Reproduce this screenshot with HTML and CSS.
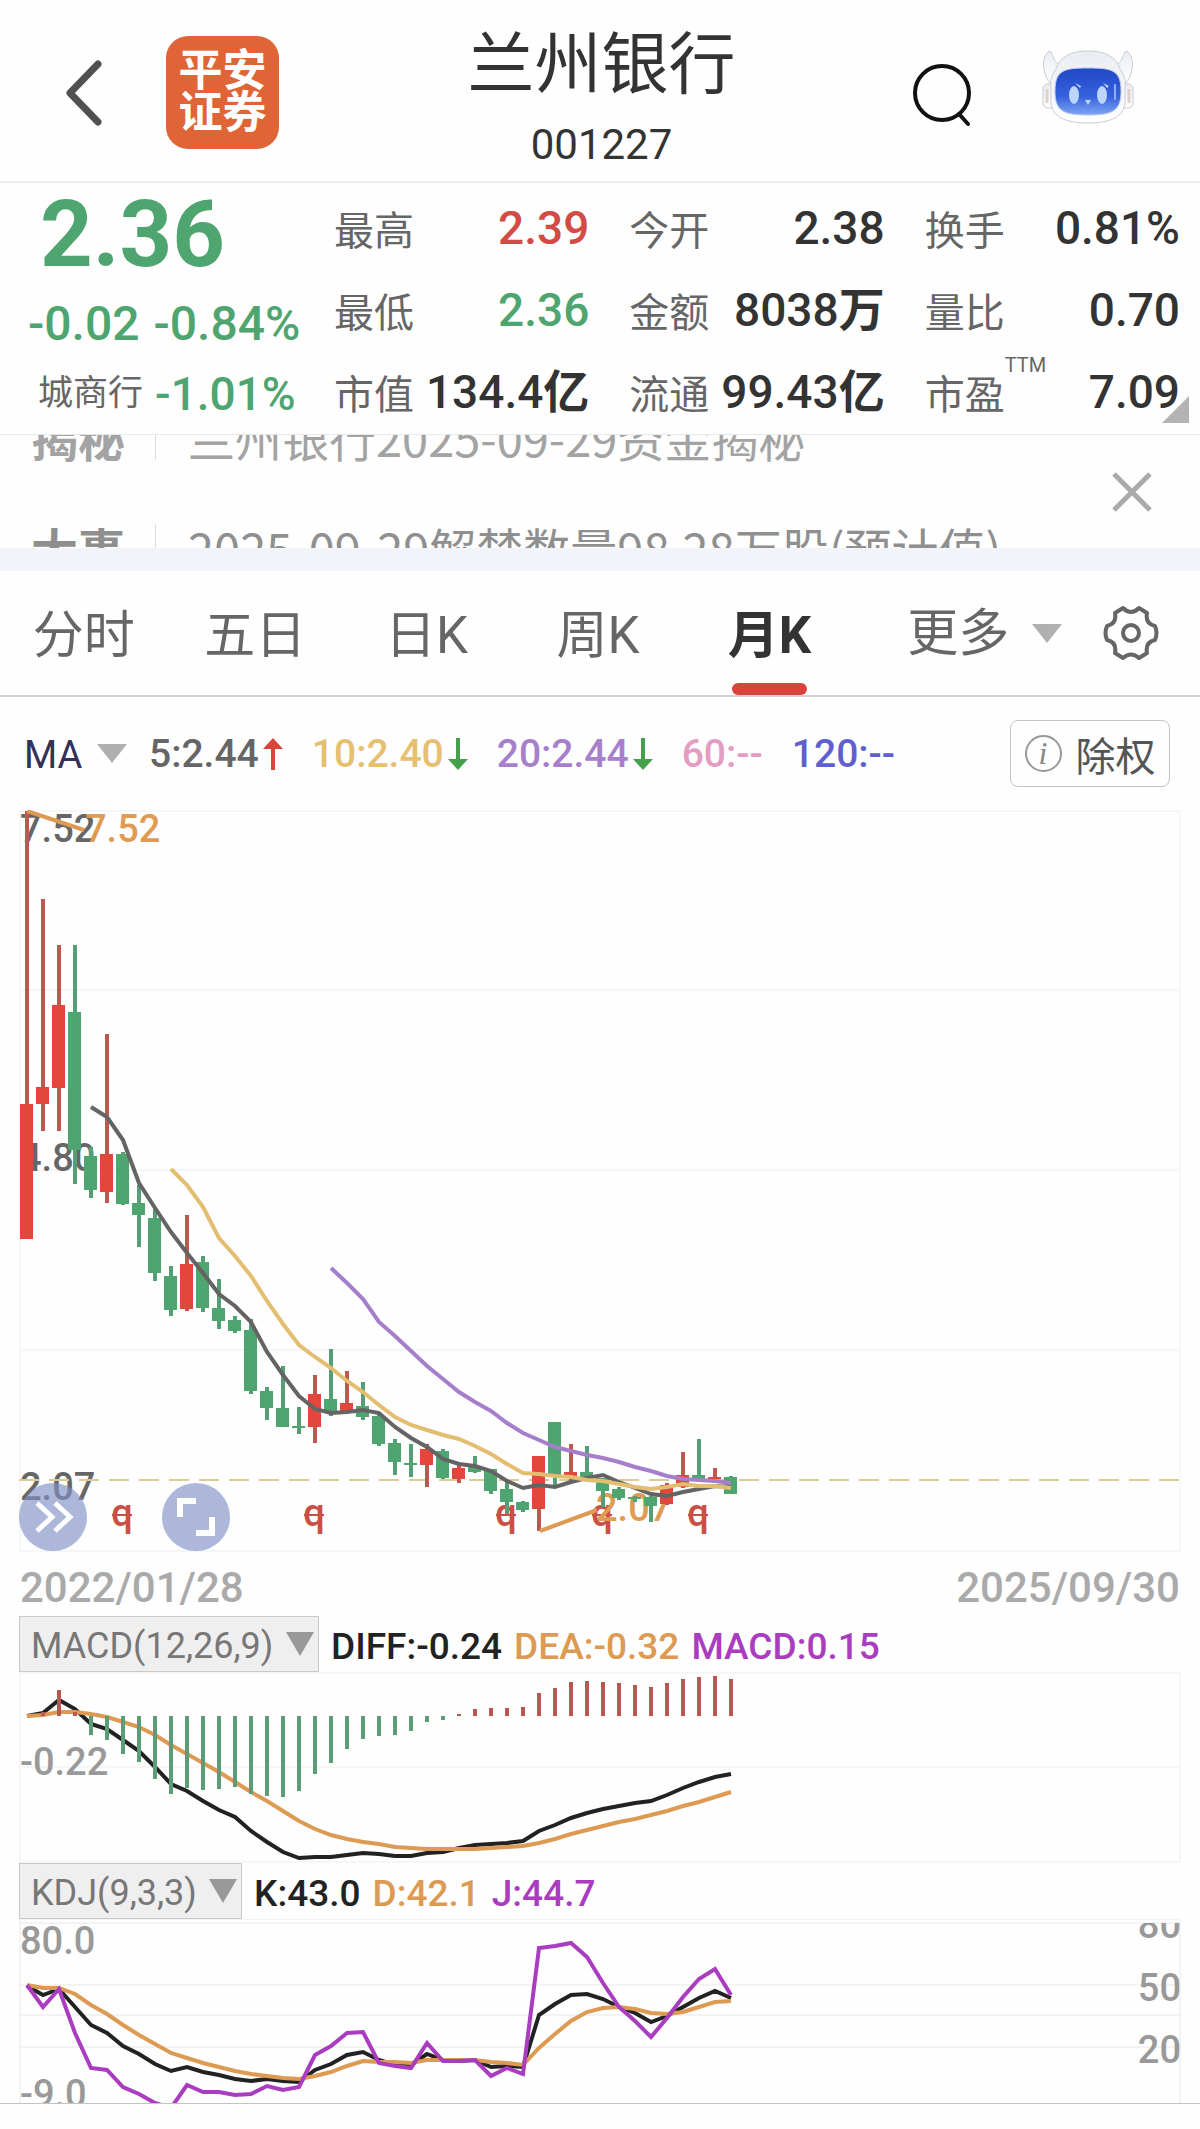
FILE: index.html
```html
<!DOCTYPE html>
<html lang="zh-CN">
<head>
    <meta charset="UTF-8">
    <meta name="viewport" content="width=device-width, initial-scale=1.0">
    <title>兰州银行 001227</title>
    <link rel="stylesheet" href="styles.css">
</head>
<body>
    <header class="header">
        <button class="icon-btn back-btn" aria-label="返回">
            <svg width="40" height="70" viewBox="0 0 40 70"><path d="M34 6 L6 35 L34 64" fill="none" stroke="#505050" stroke-width="7" stroke-linecap="round" stroke-linejoin="round"/></svg>
        </button>
        <div class="logo">平安<br>证券</div>
        <div class="title">
            <h1>兰州银行</h1>
            <div class="code">001227</div>
        </div>
        <button class="icon-btn search-btn" aria-label="搜索">
            <svg width="62" height="66" viewBox="0 0 62 66"><circle cx="30" cy="32" r="27" fill="none" stroke="#111" stroke-width="4"/><path d="M47 53 L56 63" stroke="#111" stroke-width="4" stroke-linecap="round"/></svg>
        </button>
        <button class="icon-btn robot-btn" aria-label="智能助手">
            <svg width="92" height="76" viewBox="0 0 92 76">
                <defs>
                    <linearGradient id="face" x1="0" y1="0" x2="0" y2="1">
                        <stop offset="0" stop-color="#2148c8"/>
                        <stop offset="0.6" stop-color="#3560dc"/>
                        <stop offset="1" stop-color="#7fa5f2"/>
                    </linearGradient>
                    <linearGradient id="shell" x1="0" y1="0" x2="0" y2="1">
                        <stop offset="0" stop-color="#e9ecf1"/>
                        <stop offset="1" stop-color="#fff"/>
                    </linearGradient>
                </defs>
                <g fill="url(#shell)" stroke="#c9ccd3" stroke-width="1">
                    <path d="M8 34 C-1 22 0 8 7 2 C11 2 10 12 18 17 L18 34 Z"/>
                    <path d="M84 34 C93 22 92 8 85 2 C81 2 82 12 74 17 L74 34 Z"/>
                    <rect x="1" y="35" width="12" height="24" rx="5"/>
                    <rect x="79" y="35" width="12" height="24" rx="5"/>
                    <path d="M46 2 C62 2 74 7 78 20 C83 27 84 33 83 38 L83 52 C83 68 68 74 46 74 C24 74 9 68 9 52 L9 38 C8 33 9 27 14 20 C18 7 30 2 46 2 Z"/>
                </g>
                <path d="M5 40 V54 M87 40 V54" stroke="#e3cfcf" stroke-width="3"/>
                <path d="M46 19 C70 19 79 21 79 42 C79 62 71 66 46 66 C21 66 13 62 13 42 C13 21 22 19 46 19 Z" fill="url(#face)" stroke="#b9c8f0" stroke-width="1"/>
                <g fill="#bcd6fb">
                    <ellipse cx="32" cy="46" rx="5" ry="9"/>
                    <ellipse cx="60" cy="46" rx="5" ry="9"/>
                    <path d="M43 51 H49 L46 56 Z"/>
                    <path d="M33 34 L39 37 L38 39 Z M61 34 L67 37 L65 39 Z"/>
                </g>
                <path d="M73 36 V50" stroke="#8db0f5" stroke-width="2" stroke-linecap="round"/>
            </svg>
        </button>
    </header>

    <section class="quote">
        <div class="quote-main">
            <div class="price">2.36</div>
            <div class="change"><span>-0.02</span><span>-0.84%</span></div>
            <div class="sector"><span class="sector-name">城商行</span><span>-1.01%</span></div>
        </div>
        <dl class="quote-col">
            <div><dt>最高</dt><dd class="up">2.39</dd></div>
            <div><dt>最低</dt><dd class="down">2.36</dd></div>
            <div><dt>市值</dt><dd>134.4<b>亿</b></dd></div>
        </dl>
        <dl class="quote-col">
            <div><dt>今开</dt><dd>2.38</dd></div>
            <div><dt>金额</dt><dd>8038<b>万</b></dd></div>
            <div><dt>流通</dt><dd>99.43<b>亿</b></dd></div>
        </dl>
        <dl class="quote-col">
            <div><dt>换手</dt><dd>0.81%</dd></div>
            <div><dt>量比</dt><dd>0.70</dd></div>
            <div><dt>市盈<sup>TTM</sup></dt><dd>7.09</dd></div>
        </dl>
        <span class="corner"></span>
    </section>

    <section class="news">
        <div class="news-list">
            <a href="#" class="news-row"><strong>揭秘</strong><span>兰州银行2025-09-29资金揭秘</span></a>
            <a href="#" class="news-row news-dark"><strong>大事</strong><span>2025-09-29解禁数量98.28万股(预计值)</span></a>
        </div>
        <button class="icon-btn close-btn" aria-label="关闭">
            <svg width="44" height="44" viewBox="0 0 44 44"><path d="M4 4 L40 40 M40 4 L4 40" stroke="#aaa" stroke-width="5"/></svg>
        </button>
    </section>

    <nav class="tabs">
        <button class="tab">分时</button>
        <button class="tab">五日</button>
        <button class="tab">日K</button>
        <button class="tab">周K</button>
        <button class="tab active">月K</button>
        <div class="tab-more">
            <label class="drop">
                <select class="more-select" aria-label="更多周期"><option>更多</option></select>
                <span class="arrow"></span>
            </label>
            <button class="icon-btn" aria-label="设置">
                <svg width="56" height="56" viewBox="0 0 56 56" fill="none" stroke="#666" stroke-width="4" stroke-linejoin="round"><path d="M20 3 Q28 11 36 3 L44 8 Q42 19 52 21 Q55 28 52 35 Q42 37 44 48 L36 53 Q28 46 20 53 L12 48 Q14 37 4 35 Q1 28 4 21 Q14 19 12 8 Z"/><circle cx="28" cy="28" r="8"/></svg>
            </button>
        </div>
    </nav>

    <div class="ma-bar">
        <label class="drop">
            <select class="ma-select" aria-label="均线指标"><option>MA</option></select>
            <span class="arrow"></span>
        </label>
        <div class="ma-values">
            <span class="ma5">5:2.44<svg class="trend" viewBox="0 0 20 32"><path d="M10 0 L20 11 H12 V32 H8 V11 H0 Z" fill="#d9443c"/></svg></span>
            <span class="ma10">10:2.40<svg class="trend" viewBox="0 0 20 32"><path d="M10 32 L20 21 H12 V0 H8 V21 H0 Z" fill="#44a04c"/></svg></span>
            <span class="ma20">20:2.44<svg class="trend" viewBox="0 0 20 32"><path d="M10 32 L20 21 H12 V0 H8 V21 H0 Z" fill="#44a04c"/></svg></span>
            <span class="ma60">60:--</span>
            <span class="ma120">120:--</span>
        </div>
        <button class="adjust-btn"><i>i</i>除权</button>
    </div>

    <div class="chart">
        <svg viewBox="0 810 1200 742">
            <g class="grid">
                <path d="M20 811 H1180 V1551 H20 Z M20 990 H1180 M20 1170 H1180 M20 1350 H1180"/>
            </g>
            <g class="axis">
                <text x="20" y="842">7.52</text>
                <text x="20" y="1171">4.80</text>
                <text x="20" y="1500">2.07</text>
            </g>
            <path class="last-price" d="M19 1480 H1180"/>
            <g id="dividends"></g>
            <g class="extreme">
                <text x="85" y="842">7.52</text>
                <text x="596" y="1521">2.07</text>
            </g>
            <g id="candles"></g>
            <g id="ma-lines" class="lines"></g>
            <path class="leader" d="M27 811 L84 830 M540 1531 L597 1510"/>
        </svg>
        <div class="chart-tools">
            <button class="round-btn" aria-label="展开">
                <svg width="68" height="68" viewBox="0 0 68 68"><path d="M18 20 L33 34 L18 48 M36 20 L51 34 L36 48" fill="none" stroke="#fff" stroke-width="5"/></svg>
            </button>
            <button class="round-btn" aria-label="全屏">
                <svg width="68" height="68" viewBox="0 0 68 68"><path d="M18 34 V18 H34 M50 34 V50 H34" fill="none" stroke="#fff" stroke-width="6"/></svg>
            </button>
        </div>
    </div>

    <div class="dates"><span>2022/01/28</span><span>2025/09/30</span></div>

    <div class="indicator">
        <label class="drop indicator-drop">
            <select class="macd-select" aria-label="副图指标一"><option>MACD(12,26,9)</option></select>
            <span class="arrow"></span>
        </label>
        <span class="c-black">DIFF:-0.24</span>
        <span class="c-orange">DEA:-0.32</span>
        <span class="c-purple">MACD:0.15</span>
    </div>
    <div class="chart">
        <svg viewBox="0 1672 1200 191">
            <path class="grid" d="M20 1673 H1180 V1862 H20 Z M20 1767 H1180"/>
            <text class="axis-light" x="20" y="1775">-0.22</text>
            <g id="macd-lines" class="lines"></g>
            <g id="macd-bars"></g>
        </svg>
    </div>

    <div class="indicator">
        <label class="drop indicator-drop">
            <select class="kdj-select" aria-label="副图指标二"><option>KDJ(9,3,3)</option></select>
            <span class="arrow"></span>
        </label>
        <span class="c-black">K:43.0</span>
        <span class="c-orange">D:42.1</span>
        <span class="c-purple">J:44.7</span>
    </div>
    <div class="chart chart-last">
        <svg viewBox="0 1919 1200 184">
            <path class="grid grid-dark" d="M20 2103 V1919 H1180 V2103 M20 1923 H1180 M20 1985 H1180 M20 2015 H1180 M20 2047 H1180"/>
            <g class="axis-light">
                <text x="20" y="1954">80.0</text>
                <text x="20" y="2107">-9.0</text>
            </g>
            <svg x="1100" y="1923" width="100" height="180" viewBox="1100 1923 100 180">
                <g class="axis-light axis-right">
                    <text x="1181" y="1938">80</text>
                    <text x="1181" y="2001">50</text>
                    <text x="1181" y="2063">20</text>
                </g>
            </svg>
            <g id="kdj-lines" class="lines"></g>
        </svg>
    </div>

    <script src="chart.js"></script>
</body>
</html>
```

FILE: styles.css
```css
* {
    box-sizing: border-box;
}

body {
    margin: 0;
    background-color: #fefefe;
    color: #333;
    font-family: Roboto, "Noto Sans CJK SC", sans-serif;
}

button,
select {
    font-family: inherit;
    color: inherit;
    background: none;
    border: none;
    padding: 0;
    margin: 0;
    cursor: pointer;
}

select {
    appearance: none;
    outline: none;
}

svg {
    display: block;
}

.icon-btn {
    display: block;
}

/* header */
.header {
    display: grid;
    grid-template-columns: 166px 113px 1fr 132px 92px;
    align-items: center;
    height: 183px;
    padding: 4px 66px 0 0;
    border-bottom: 2px solid #ececec;
}

.back-btn {
    margin-left: 64px;
}

.logo {
    height: 113px;
    padding-top: 14px;
    border-radius: 22px;
    background-color: #df6537;
    color: #fff;
    font-size: 44px;
    font-weight: bold;
    line-height: 42px;
    text-align: center;
}

.title {
    margin-left: 14px;
    padding-top: 16px;
    text-align: center;
}

.title h1 {
    margin: 0;
    font-size: 67px;
    font-weight: normal;
    line-height: 88px;
}

.code {
    font-size: 42px;
    line-height: 72px;
}

.search-btn {
    padding: 2px 0 0 2px;
}

.robot-btn {
    margin-bottom: 12px;
}

/* quote */
.quote {
    position: relative;
    display: grid;
    grid-template-columns: 294px repeat(3, 1fr);
    column-gap: 40px;
    height: 252px;
    padding-right: 20px;
    border-bottom: 1px solid #e8e8e8;
}

.quote-main {
    color: #4ea56f;
    font-weight: 500;
    white-space: nowrap;
}

.price {
    padding-left: 40px;
    font-size: 92px;
    font-weight: bold;
    line-height: 104px;
}

.change {
    display: flex;
    gap: 14px;
    padding-left: 28px;
    font-size: 48px;
    line-height: 74px;
}

.sector {
    display: flex;
    align-items: center;
    gap: 12px;
    padding-left: 38px;
    font-size: 46px;
    line-height: 66px;
}

.sector-name {
    color: #666;
    font-size: 35px;
    font-weight: normal;
}

.quote-col {
    margin: 0;
    padding-top: 4px;
    white-space: nowrap;
}

.quote-col div {
    display: flex;
    justify-content: space-between;
    align-items: center;
    height: 82px;
}

.quote-col dt {
    position: relative;
    color: #666;
    font-size: 40px;
}

.quote-col sup {
    position: absolute;
    left: 100%;
    top: -10px;
    font-size: 20px;
    line-height: 24px;
}

.quote-col dd {
    margin: 0;
    font-size: 46px;
    font-weight: 500;
    line-height: 60px;
}

.up {
    color: #d24b45;
}

.down {
    color: #4ea56f;
}

.corner {
    position: absolute;
    right: 11px;
    bottom: 11px;
    border-left: 27px solid transparent;
    border-bottom: 27px solid #b3b3b3;
}

/* news ticker */
.news {
    display: flex;
    align-items: center;
    justify-content: space-between;
    height: 136px;
    padding-right: 46px;
    border-bottom: 23px solid #f3f4f9;
}

.news-list {
    display: flex;
    flex-direction: column;
    justify-content: center;
    height: 113px;
    overflow: hidden;
}

.news-row {
    display: flex;
    align-items: center;
    flex: 0 0 111px;
    padding-left: 31px;
    color: #a3a3a3;
    font-family: "Noto Sans CJK SC", sans-serif;
    font-size: 47px;
    line-height: 47px;
    text-decoration: none;
    white-space: nowrap;
}

.news-dark {
    color: #8f8f8f;
}

.news-row span {
    margin-left: 30px;
    padding-left: 32px;
    border-left: 1px solid #ddd;
}

/* period tabs */
.tabs {
    display: grid;
    grid-template-columns: repeat(5, 1fr) 2fr;
    height: 126px;
    border-bottom: 2px solid #d2d2d2;
    color: #666;
}

.tab {
    position: relative;
    padding: 0 4px 4px 0;
    font-size: 51px;
}

.tab.active {
    color: #333;
    font-weight: bold;
}

.tab.active::after {
    content: "";
    position: absolute;
    left: 50%;
    bottom: 0;
    width: 75px;
    height: 12px;
    margin-left: -39px;
    border-radius: 6px;
    background-color: #db443a;
}

.tab-more {
    display: flex;
    align-items: center;
    justify-content: space-between;
    padding: 0 41px 0 50px;
}

.drop {
    display: flex;
    align-items: center;
}

.more-select {
    font-size: 51px;
    height: 70px;
    margin-right: 22px;
}

.arrow {
    border: 15px solid transparent;
    border-top: 19px solid #b0b0b0;
    border-bottom: 0;
}

/* moving averages */
.ma-bar {
    display: flex;
    align-items: center;
    height: 113px;
    padding: 0 30px 0 24px;
}

.ma-select {
    color: #33305a;
    font-size: 38px;
    height: 60px;
    padding-top: 3px;
    margin-right: 14px;
}

.ma-values {
    display: flex;
    gap: 29px;
    margin-left: 22px;
    font-size: 39px;
    font-weight: 500;
}

.ma-values span {
    display: flex;
    align-items: center;
    gap: 4px;
}

.trend {
    width: 20px;
    height: 32px;
}

.ma5 {
    color: #666;
}

.ma10 {
    color: #e6bf70;
}

.ma20 {
    color: #a87fcc;
}

.ma60 {
    color: #e39cc2;
}

.ma120 {
    color: #5f5fd0;
}

.adjust-btn {
    display: flex;
    align-items: center;
    justify-content: center;
    gap: 14px;
    width: 160px;
    height: 67px;
    margin-left: auto;
    border: 1px solid #c4c4c4;
    border-radius: 8px;
    color: #555;
    font-size: 40px;
}

.adjust-btn i {
    width: 37px;
    height: 37px;
    border: 2px solid #999;
    border-radius: 50%;
    color: #888;
    font-family: "Liberation Serif", serif;
    font-size: 32px;
    line-height: 32px;
}

/* charts */
.chart {
    position: relative;
}

.chart > svg {
    width: 100%;
    height: auto;
}

.chart-last {
    border-bottom: 1px solid #c4c4c4;
}

.grid {
    fill: none;
    stroke: #f6f6f6;
    stroke-width: 2;
}

.grid-dark {
    stroke: #f3f3f3;
}

.axis,
.axis-light,
.extreme {
    font-size: 38px;
    font-weight: 500;
    fill: #666;
}

.axis-light {
    fill: #999;
}

.axis-right {
    text-anchor: end;
}

.extreme {
    fill: #e09b52;
}

.last-price {
    stroke: #dccb98;
    stroke-width: 2;
    stroke-dasharray: 20 10;
}

.leader {
    stroke: #dc9a52;
    stroke-width: 4;
}

.dividend {
    fill: #c94f47;
    font-size: 38px;
    font-weight: 500;
    text-anchor: middle;
}

.lines {
    fill: none;
    stroke-width: 4;
}

.chart-tools {
    position: absolute;
    left: 19px;
    bottom: 1px;
    display: flex;
    gap: 75px;
}

.round-btn {
    width: 68px;
    height: 68px;
    border-radius: 50%;
    background-color: rgba(127, 145, 198, 0.65);
}

.dates {
    display: flex;
    justify-content: space-between;
    padding: 8px 20px 0;
    color: #aaa;
    font-size: 42px;
    font-weight: 500;
    line-height: 56px;
}

/* MACD and KDJ rows */
.indicator {
    display: flex;
    align-items: center;
    gap: 12px;
    height: 56px;
    padding-left: 19px;
    font-size: 37px;
    font-weight: 500;
    white-space: nowrap;
}

.indicator > span {
    padding-top: 4px;
}

.indicator-drop {
    height: 56px;
    padding: 0 4px 0 11px;
    border: 1px solid #c8c8c8;
    background-color: #efefef;
}

.indicator-drop select {
    height: 54px;
    padding-top: 3px;
    margin-right: 12px;
    color: #777;
    font-size: 36px;
}

.indicator-drop .arrow {
    border-width: 14px;
    border-top: 24px solid #999;
    border-bottom: 0;
}

.c-black {
    color: #222;
}

.c-orange {
    color: #dc9a52;
}

.c-purple {
    color: #aa3cc0;
}
```

FILE: chart.js
```js
const RED = '#e2463d';
const GREEN = '#4ea56f';
const STEP = 16;

// [up, high, body top, body bottom, low]
const candles = [
    [1, 811, 1104, 1239, 1239], [1, 899, 1087, 1104, 1131], [1, 945, 1005, 1088, 1131],
    [0, 945, 1012, 1150, 1184], [0, 1147, 1156, 1190, 1198], [1, 1034, 1154, 1192, 1203],
    [0, 1152, 1154, 1204, 1205], [0, 1185, 1203, 1215, 1247], [0, 1207, 1218, 1273, 1281],
    [0, 1266, 1276, 1310, 1316], [1, 1215, 1264, 1309, 1311], [0, 1256, 1262, 1308, 1312],
    [0, 1279, 1308, 1321, 1329], [0, 1316, 1320, 1331, 1333], [0, 1319, 1330, 1391, 1394],
    [0, 1387, 1391, 1408, 1420], [0, 1366, 1408, 1427, 1427], [0, 1407, 1426, 1428, 1434],
    [1, 1375, 1394, 1427, 1443], [0, 1349, 1399, 1412, 1416], [1, 1371, 1403, 1411, 1411],
    [0, 1382, 1406, 1417, 1420], [0, 1412, 1416, 1444, 1446], [0, 1439, 1443, 1462, 1475],
    [0, 1444, 1463, 1465, 1477], [1, 1444, 1449, 1465, 1487], [0, 1449, 1451, 1478, 1479],
    [1, 1463, 1468, 1479, 1483], [0, 1456, 1466, 1472, 1473], [0, 1469, 1469, 1491, 1494],
    [0, 1481, 1489, 1502, 1514], [0, 1501, 1502, 1510, 1512], [1, 1456, 1456, 1509, 1531],
    [0, 1422, 1422, 1476, 1487], [1, 1444, 1472, 1477, 1481], [0, 1446, 1472, 1479, 1479],
    [0, 1478, 1478, 1491, 1507], [0, 1487, 1489, 1498, 1500], [0, 1496, 1497, 1499, 1502],
    [0, 1496, 1497, 1506, 1522], [1, 1483, 1485, 1504, 1505], [1, 1452, 1475, 1487, 1488],
    [0, 1439, 1475, 1480, 1480], [1, 1468, 1477, 1479, 1479], [0, 1476, 1477, 1494, 1494]
];

const ma5 = [1107, 1117, 1140, 1183, 1208, 1232, 1253, 1273, 1294, 1306, 1322, 1352, 1375, 1396, 1409, 1413, 1412, 1410, 1413, 1427, 1438, 1447, 1459, 1464, 1466, 1471, 1481, 1488, 1485, 1487, 1482, 1478, 1475, 1482, 1488, 1494, 1496, 1492, 1489, 1486, 1487];
const ma10 = [1169, 1185, 1207, 1238, 1256, 1276, 1301, 1324, 1345, 1357, 1368, 1381, 1392, 1405, 1417, 1425, 1430, 1435, 1439, 1446, 1454, 1464, 1473, 1474, 1476, 1477, 1480, 1481, 1484, 1487, 1489, 1487, 1484, 1486, 1486, 1488];
const ma20 = [1268, 1283, 1299, 1322, 1336, 1351, 1366, 1379, 1392, 1402, 1411, 1423, 1433, 1440, 1447, 1451, 1455, 1458, 1462, 1467, 1471, 1476, 1479, 1480, 1481, 1483];

const bars = [1716, 1712, 1690, 1712, 1735, 1740, 1754, 1762, 1779, 1794, 1788, 1790, 1789, 1787, 1794, 1796, 1797, 1791, 1774, 1763, 1749, 1739, 1736, 1735, 1731, 1722, 1720, 1714, 1709, 1708, 1708, 1707, 1693, 1688, 1682, 1681, 1682, 1683, 1685, 1687, 1683, 1679, 1677, 1676, 1679];
const diff = [1716, 1713, 1700, 1709, 1724, 1729, 1740, 1751, 1767, 1784, 1791, 1801, 1810, 1817, 1831, 1842, 1852, 1858, 1857, 1857, 1855, 1853, 1854, 1856, 1856, 1853, 1852, 1848, 1845, 1844, 1843, 1841, 1831, 1825, 1818, 1813, 1809, 1806, 1803, 1801, 1795, 1788, 1782, 1777, 1774];
const dea = [1716, 1715, 1712, 1712, 1714, 1717, 1722, 1727, 1735, 1745, 1754, 1763, 1772, 1782, 1792, 1801, 1811, 1821, 1829, 1835, 1839, 1842, 1844, 1847, 1848, 1849, 1849, 1849, 1849, 1848, 1847, 1846, 1843, 1839, 1834, 1830, 1826, 1822, 1819, 1815, 1811, 1806, 1802, 1797, 1792];

const kLine = [1986, 1995, 1989, 2007, 2025, 2033, 2046, 2054, 2064, 2071, 2067, 2072, 2075, 2079, 2081, 2079, 2081, 2082, 2070, 2064, 2055, 2052, 2060, 2065, 2065, 2054, 2060, 2061, 2060, 2067, 2066, 2067, 2015, 2004, 1995, 1994, 1999, 2007, 2013, 2022, 2016, 2007, 1998, 1991, 1998];
const dLine = [1985, 1988, 1988, 1994, 2005, 2014, 2025, 2035, 2044, 2053, 2058, 2063, 2067, 2071, 2074, 2076, 2078, 2079, 2076, 2072, 2066, 2061, 2062, 2062, 2063, 2060, 2060, 2060, 2060, 2062, 2063, 2065, 2048, 2034, 2021, 2012, 2008, 2007, 2009, 2013, 2014, 2012, 2007, 2002, 2001];
const jLine = [1985, 2007, 1989, 2033, 2068, 2070, 2087, 2094, 2103, 2108, 2085, 2092, 2092, 2095, 2094, 2086, 2090, 2087, 2055, 2046, 2033, 2032, 2063, 2066, 2068, 2043, 2061, 2061, 2060, 2076, 2068, 2074, 1948, 1946, 1943, 1957, 1983, 2007, 2021, 2037, 2018, 1997, 1979, 1969, 1995];

function line(values, start, color) {
    const points = values.map((y, i) => (27 + STEP * (i + start)) + ',' + y).join(' ');
    return '<polyline points="' + points + '" stroke="' + color + '"/>';
}

function rect(x, y, w, h, color) {
    return '<rect x="' + x + '" y="' + y + '" width="' + w + '" height="' + h + '" fill="' + color + '"/>';
}

function draw(id, html) {
    document.getElementById(id).innerHTML = html;
}

draw('candles', candles.map(([up, high, top, bottom, low], i) => {
    const x = 20 + STEP * i;
    return rect(x + 5, high, 4, low - high, up ? '#bd5850' : '#559f76') +
        rect(x, top, 13, bottom - top, up ? RED : GREEN);
}).join(''));

draw('ma-lines', line(ma5, 4, '#646464') + line(ma20, 19, '#a57fca') + line(ma10, 9, '#e4be70'));

// dividend marks: a struck-through q
draw('dividends', [122, 314, 506, 602, 698].map(x =>
    '<text class="dividend" x="' + x + '" y="1526">q</text>' + rect(x - 10, 1514, 20, 2, '#c94f47')
).join(''));

draw('macd-bars', bars.map((y, i) =>
    rect(25 + STEP * i, Math.min(y, 1716), 4, Math.abs(y - 1716), y < 1716 ? '#b85850' : '#5a9d76')
).join(''));
draw('macd-lines', line(diff, 0, '#222') + line(dea, 0, '#dc9a52'));

draw('kdj-lines', line(kLine, 0, '#222') + line(dLine, 0, '#dc9a52') + line(jLine, 0, '#aa3cc0'));
```
